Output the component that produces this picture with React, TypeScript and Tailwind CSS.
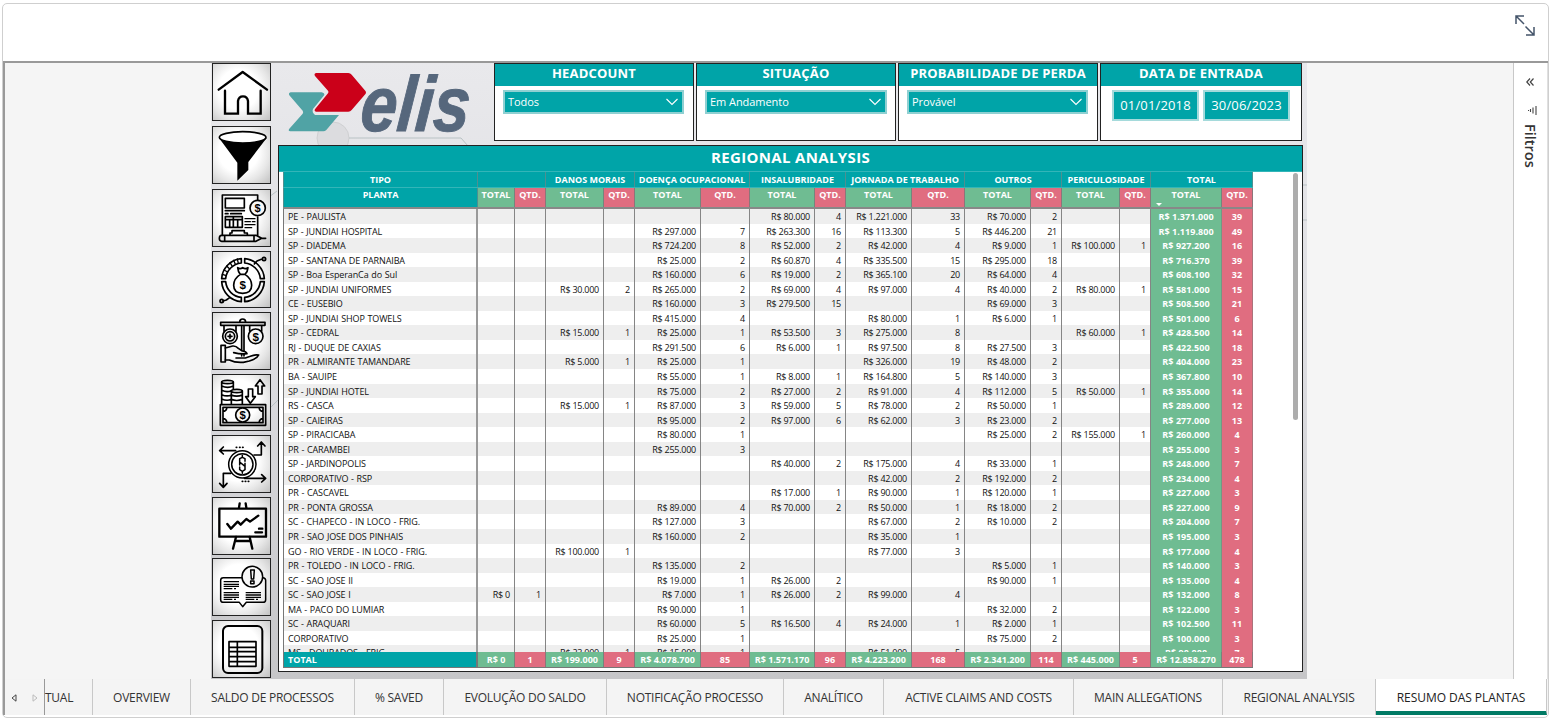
import React from "react";

const COLS =
  "grid grid-cols-[195px_37px_31px_58px_31px_66px_49px_65px_31px_66px_53px_66px_31px_58px_31px_71px_31px]";

const GROUPS: [string, string][] = [
  ["", "w-[68px]"],
  ["DANOS MORAIS", "w-[89px]"],
  ["DOENÇA OCUPACIONAL", "w-[115px]"],
  ["INSALUBRIDADE", "w-[96px]"],
  ["JORNADA DE TRABALHO", "w-[119px]"],
  ["OUTROS", "w-[97px]"],
  ["PERICULOSIDADE", "w-[89px]"],
  ["TOTAL", "w-[102px]"],
];

// name | (none) | danos | doença | insalubridade | jornada | outros | periculosidade | total
const ROWS = `PE - PAULISTA||||80.000,4|1.221.000,33|70.000,2||1.371.000,39
SP - JUNDIAI HOSPITAL|||297.000,7|263.300,16|113.300,5|446.200,21||1.119.800,49
SP - DIADEMA|||724.200,8|52.000,2|42.000,4|9.000,1|100.000,1|927.200,16
SP - SANTANA DE PARNAIBA|||25.000,2|60.870,4|335.500,15|295.000,18||716.370,39
SP - Boa EsperanCa do Sul|||160.000,6|19.000,2|365.100,20|64.000,4||608.100,32
SP - JUNDIAI UNIFORMES||30.000,2|265.000,2|69.000,4|97.000,4|40.000,2|80.000,1|581.000,15
CE - EUSEBIO|||160.000,3|279.500,15||69.000,3||508.500,21
SP - JUNDIAI SHOP TOWELS|||415.000,4||80.000,1|6.000,1||501.000,6
SP - CEDRAL||15.000,1|25.000,1|53.500,3|275.000,8||60.000,1|428.500,14
RJ - DUQUE DE CAXIAS|||291.500,6|6.000,1|97.500,8|27.500,3||422.500,18
PR - ALMIRANTE TAMANDARE||5.000,1|25.000,1||326.000,19|48.000,2||404.000,23
BA - SAUIPE|||55.000,1|8.000,1|164.800,5|140.000,3||367.800,10
SP - JUNDIAI HOTEL|||75.000,2|27.000,2|91.000,4|112.000,5|50.000,1|355.000,14
RS - CASCA||15.000,1|87.000,3|59.000,5|78.000,2|50.000,1||289.000,12
SP - CAIEIRAS|||95.000,2|97.000,6|62.000,3|23.000,2||277.000,13
SP - PIRACICABA|||80.000,1|||25.000,2|155.000,1|260.000,4
PR - CARAMBEI|||255.000,3|||||255.000,3
SP - JARDINOPOLIS||||40.000,2|175.000,4|33.000,1||248.000,7
CORPORATIVO - RSP|||||42.000,2|192.000,2||234.000,4
PR - CASCAVEL||||17.000,1|90.000,1|120.000,1||227.000,3
PR - PONTA GROSSA|||89.000,4|70.000,2|50.000,1|18.000,2||227.000,9
SC - CHAPECO - IN LOCO - FRIG.|||127.000,3||67.000,2|10.000,2||204.000,7
PR - SAO JOSE DOS PINHAIS|||160.000,2||35.000,1|||195.000,3
GO - RIO VERDE - IN LOCO - FRIG.||100.000,1|||77.000,3|||177.000,4
PR - TOLEDO - IN LOCO - FRIG.|||135.000,2|||5.000,1||140.000,3
SC - SAO JOSE II|||19.000,1|26.000,2||90.000,1||135.000,4
SC - SAO JOSE I|0,1||7.000,1|26.000,2|99.000,4|||132.000,8
MA - PACO DO LUMIAR|||90.000,1|||32.000,2||122.000,3
SC - ARAQUARI|||60.000,5|16.500,4|24.000,1|2.000,1||102.500,11
CORPORATIVO|||25.000,1|||75.000,2||100.000,3
MS - DOURADOS - FRIG.||23.000,1|15.000,1||51.000,5|||90.000,7`
  .split("\n")
  .map((l) => {
    const [name, ...groups] = l.split("|");
    return { name, cells: groups.flatMap((g) => (g ? ["R$ " + g.split(",")[0], g.split(",")[1]] : ["", ""])) };
  });

const TOTALS = [
  "R$ 0", "1", "R$ 199.000", "9", "R$ 4.078.700", "85", "R$ 1.571.170", "96",
  "R$ 4.223.200", "168", "R$ 2.341.200", "114", "R$ 445.000", "5", "R$ 12.858.270", "478",
];

const TABS: [string, string][] = [
  ["OVERVIEW", "w-[98px]"],
  ["SALDO DE PROCESSOS", "w-[164px]"],
  ["% SAVED", "w-[89px]"],
  ["EVOLUÇÃO DO SALDO", "w-[163px]"],
  ["NOTIFICAÇÃO PROCESSO", "w-[177px]"],
  ["ANALÍTICO", "w-[100px]"],
  ["ACTIVE CLAIMS AND COSTS", "w-[190px]"],
  ["MAIN ALLEGATIONS", "w-[149px]"],
  ["REGIONAL ANALYSIS", "w-[153px]"],
];

function Coin({ x, y, r, s = 34 }: { x: number; y: number; r: number; s?: number }) {
  return (
    <>
      <circle cx={x} cy={y} r={r} fill="#f7f7f7" />
      <text x={x} y={y + s * 0.36} textAnchor="middle" fontSize={s} fontWeight="700" fill="#000" stroke="none" fontFamily="Liberation Sans, sans-serif">
        $
      </text>
    </>
  );
}

const ICONS: React.ReactNode[] = [
  <g strokeWidth="7">
    <path d="M20 80 92 27l73 53" />
    <path d="M39 83v69h39v-38q2-14 15-14t15 14v38h38V83" strokeLinejoin="miter" />
  </g>,
  <g>
    <path d="M21 36 76 110v54l33-32v-24l55-72z" fill="#000" stroke="none" />
    <ellipse cx="92" cy="34" rx="70" ry="17" fill="#fff" strokeWidth="5" />
  </g>,
  <g strokeWidth="5">
    <path d="M31 139V18h106v14M137 84v55" />
    <path d="M40 28h57v29H40zM40 65h57M40 74h8M56 74h32M40 83h51v32H40zM40 92h51M53 92v23M64 83v32M77 92v23" />
    <path d="M99 89h30M99 98h16M121 98h8M99 107h30M99 116h20" strokeWidth="4" />
    <path d="M29 139h103l17 9-17 9H29q-7 0-7-9t7-9zM38 139v18M126 139v18M149 148h12M54 138v-6h6v-7h37v7h9v6" />
    <Coin x={137} y={57} r={23} s={33} />
  </g>,
  <g strokeWidth="5">
    <path d="M98 23a64 64 0 0 1 59 60h-12a52 52 0 0 0-47-47zM157 92a64 64 0 0 1-59 60v-13a52 52 0 0 0 47-47zM88 152a64 64 0 0 1-59-60h12a52 52 0 0 0 47 47zM29 83a64 64 0 0 1 59-60v13a52 52 0 0 0-47 47z" />
    <path d="m31 70 12 4M36 57l11 6M44 45l9 9M54 35l7 11M65 28l5 12M76 24l3 13" strokeWidth="4" />
    <path d="M127 39l8-9 13-5M53 140l-10 7-10 3" />
    <circle cx="156" cy="24" r="5" />
    <circle cx="29" cy="150" r="5" />
    <path d="M77 50q7 6 15 0 8 6 16 0-1 13-9 20H85q-7-8-8-20zM85 70q-20 13-20 33 0 24 27 24t27-24q0-20-20-33" />
    <text x="92" y="113" textAnchor="middle" fontSize="35" fontWeight="700" fill="#000" stroke="none" fontFamily="Liberation Sans, sans-serif">
      $
    </text>
  </g>,
  <g strokeWidth="5">
    <path d="M26 31h133v9H26zM83 31q0-10 9-10t9 10M89 40v92M96 40v92M36 40v18M72 40v18M113 40v18M149 40v18" />
    <Coin x={131} y={73} r={22} s={35} />
    <circle cx="54" cy="73" r="22" fill="#f7f7f7" />
    <circle cx="54" cy="73" r="14" />
    <path d="M54 67v12M48 73h12" />
    <path d="M27 100h13v50H27z" />
    <path d="m40 108 22-6q10-1 17 7l12 8q12 1 14 8-20 2-40-3M40 144h12q18 9 42 7l18-4q24-8 28-18-10-2-25 4l-15 5H72" fill="#f3f3f3" />
  </g>,
  <g strokeWidth="5">
    <path d="M25 92h136v62H25zM33 100h120v46H33zM33 112q10 0 12-12M153 112q-10 0-12-12M33 134q10 0 12 12M153 134q-10 0-12 12" />
    <Coin x={92} y={123} r={21} s={34} />
    <path d="M29 24v65M64 24v21M29 36q18 8 35 0M29 49q16 7 29 1M29 62q16 7 29 1M29 75q16 7 29 1M58 51v38M91 51v38M58 63q16 7 33 0M58 76q16 7 33 0" />
    <ellipse cx="46.500" cy="24" rx="17.500" ry="5" />
    <ellipse cx="74.500" cy="51" rx="16.500" ry="5" />
    <path d="M109 45h13v23h8l-15 20-14-20h8zM138 60V36h-8l14-19 14 19h-8v24z" />
  </g>,
  <g strokeWidth="4.500">
    <circle cx="91" cy="88" r="41" />
    <circle cx="91" cy="88" r="32" />
    <path d="M99 79v-8l-8-4-8 4v10l16 13v10l-8 5-8-5v-8M83 90v-9M99 94v-9M91 61v6M91 109v6" />
    <path d="M71 47H24M34 36 23 47l11 10M126 60h22V22M137 33l11-12 11 12M97 130h62M149 119l12 11-12 11M57 115H34v40M23 145l11 12 11-12" strokeWidth="5" />
    <path d="M73 37h1M83 37h1M92 37h1M91 139h1M100 139h1M109 139h1" strokeWidth="5.500" />
  </g>,
  <g strokeWidth="7">
    <path d="M22 35h140v84H22z" />
    <path d="m83 19-2 13M101 19l2 13M72 120l-9 35M113 120l8 35M70 132h46" />
    <path d="m46 81 11 14 20-21 9 9 17-17 11 8 25-18M141 95h10M130 106h20" />
  </g>,
  <g strokeWidth="4.500">
    <path d="M91 59H34q-8 0-8 8v58q0 8 8 8h48l10 13 11-13h50q8 0 8-8V67q0-6-7-8" />
    <path d="M35 71h46M35 79h46M35 85h46M35 92h26M66 92h6M35 104h46M35 111h46M35 118h46M35 124h26M66 124h6M101 104h46M101 111h46M101 118h46M101 124h26M132 124h6" strokeWidth="4" strokeLinecap="butt" />
    <circle cx="121" cy="56" r="31" fill="#f7f7f7" />
    <path d="M116 36h11l-2 27h-7zM116 69h10v8h-10z" />
  </g>,
  <g strokeWidth="6">
    <rect x="33" y="18" width="118" height="141" rx="15" />
    <path d="M51 65h81v74H51zM51 82h81M51 95h81M51 110h81M51 125h81M76 65v74" strokeWidth="5" />
  </g>,
];

function Slicer({ title, value, inner }: { title: string; value: string; inner: string }) {
  return (
    <div className="h-[78px] w-[200px] border border-[#222] bg-white">
      <div className="flex h-[22px] items-center justify-center bg-[#00a4a8] pb-[3px] text-[13px] font-bold tracking-[0.200px] whitespace-nowrap text-white">{title}</div>
      <div className={`mt-[4px] ml-[8px] flex h-[24px] items-center justify-between border-2 border-[#8fd0d2] bg-[#00a4a8] pr-[4px] pl-[3px] text-[11px] tracking-[-0.050px] text-white ${inner}`}>
        <span>{value}</span>
        <svg width="12" height="8" viewBox="0 0 12 8" fill="none" stroke="#fff" strokeWidth="1.100">
          <path d="M.5 1 6 6.500 11.500 1" />
        </svg>
      </div>
    </div>
  );
}

export default function App() {
  return (
    <div className="relative flex h-[720px] w-[1553px] flex-col overflow-hidden bg-white px-[2px] pt-[3px] font-['Open_Sans','Noto_Sans',sans-serif]">
      <div className="flex h-[715px] w-[1547px] flex-col rounded-[5px] border border-[#cfcfcf] bg-white">
        <header className="flex h-[57px] items-start justify-end pt-[11px] pr-[12px]">
          <svg width="22" height="22" viewBox="0 0 22 22" fill="none" stroke="#44546a" strokeWidth="1.500">
            <path d="M10 1H2v8M2 1l8 8M20 12v8h-8M20 20l-8.500-8.500" />
          </svg>
        </header>

        <div className="flex h-[618px] border-t-2 border-l-2 border-t-[#999] border-l-[#999] bg-[#f5f5f5] pl-[206px]">
          <main className="relative flex h-[616px] w-[1096px] bg-linear-to-b from-[#e9e9ec] via-[#dcdce0] to-[#c6c6c8]">
            <svg className="absolute top-0 left-0" width="1096" height="616" viewBox="0 0 1096 616" fill="none" stroke="#b9c2c4" strokeWidth="1">
              <circle cx="122" cy="75" r="16" fill="#dcdcdf" stroke="#cfd0d2" />
              <path d="M138 75h112l7 8M66 128l-8 6M60 196H58M60 344l8-8M1091 122h5M1091 157h5" />
            </svg>
            <nav className="relative flex h-[616px] w-[60px] flex-col gap-[3.900px] pl-px">
              {ICONS.map((icon, i) => (
                <div
                  key={i}
                  className={`h-[57.700px] w-[59px] shrink-0 border border-[#222] bg-[radial-gradient(circle_at_45%_45%,#ffffff_45%,#e6e6e6_70%,#b5b5b5_110%)] ${i < 2 ? "mb-[1.400px]" : ""}`}
                >
                  <svg className="-mt-px -ml-px" width="59" height="58" viewBox="0 0 177 174" fill="none" stroke="#000" strokeLinejoin="round" strokeLinecap="round">
                    {icon}
                  </svg>
                </div>
              ))}
            </nav>

            <div className="relative flex flex-col pl-[7px]">
              <div className="flex h-[82px]">
                <svg width="216" height="82" viewBox="219 9 648 246">
                  <path d="M333 39h97q6 0 10 5l42 50q2 4 0 7l-42 49q-4 5-10 5h-97q-7-2-2-9l38-46q3-4 0-8l-39-44q-4-7 3-9z" fill="#cb0019" />
                  <path d="M257 97h93q9 2 8 8l-34 42q-4 10 6 18h72l-38 45q-4 4-9 4h-99q-8-2-3-8l40-45q3-5 0-9l-40-46q-4-6 4-9z" fill="#50a3a5" />
                  <g transform="translate(0 212) skewX(-5)" fill="#56677c" stroke="#56677c" strokeWidth="3">
                    <text x="462" y="0" textLength="328" lengthAdjust="spacingAndGlyphs" fontFamily="Liberation Sans, Arial, sans-serif" fontWeight="700" fontStyle="italic" fontSize="234">
                      elis
                    </text>
                  </g>
                </svg>
                <div className="flex gap-[2px]">
                  <Slicer title="HEADCOUNT" value="Todos" inner="w-[181px]" />
                  <Slicer title="SITUAÇÃO" value="Em Andamento" inner="w-[182px]" />
                  <Slicer title="PROBABILIDADE DE PERDA" value="Provável" inner="w-[181px]" />
                  <div className="h-[78px] w-[202px] border border-[#222] bg-white">
                    <div className="flex h-[22px] items-center justify-center bg-[#00a4a8] pb-[3px] text-[13px] font-bold tracking-[0.250px] text-white">DATA DE ENTRADA</div>
                    <div className="mt-[4px] ml-[11px] flex gap-[4px] text-[13px] tracking-[0.150px] text-white">
                      {["01/01/2018", "30/06/2023"].map((d) => (
                        <div key={d} className="flex h-[31px] w-[87px] items-center justify-center border-2 border-[#a5dadb] bg-[#00a4a8]">
                          {d}
                        </div>
                      ))}
                    </div>
                  </div>
                </div>
              </div>

              <section className="h-[527px] w-[1025px] border border-[#222] bg-white">
                <h1 className="flex h-[26px] items-center justify-center border-b border-[#33b5b8] bg-[#00a4a8] pb-[2px] text-[15px] font-bold tracking-[0.350px] text-white">REGIONAL ANALYSIS</h1>
                <div className="flex justify-between pr-[4px] pl-[4px]">
                  <div className="h-[497px] w-[970px] text-[9px]">
                    <div className="flex h-[15px] bg-[#00a4a8] leading-[16px] font-bold text-white">
                      <div className="w-[195px] border-x border-[#4f8f90] text-center">TIPO</div>
                      {GROUPS.map(([g, w], i) => (
                        <div key={i} className={`border-r border-[#4f8f90] text-center whitespace-nowrap ${w}`}>{g}</div>
                      ))}
                    </div>
                    <div className={`${COLS} h-[22px] border-t border-b-2 border-t-[#33b5b8] border-b-[#888] leading-[13px] font-bold text-white`}>
                      <div className="border-x border-[#4f8f90] bg-[#00a4a8] text-center">PLANTA</div>
                      {TOTALS.map((_, i) => (
                        <div key={i} className={`relative border-r border-[#777]/80 text-center ${i % 2 ? "bg-[#e06d80]" : "bg-[#6fbc92]"}`}>
                          {i % 2 ? "QTD." : "TOTAL"}
                          {i === 14 && <span className="absolute bottom-[1px] left-[5px] border-x-[3px] border-t-[3px] border-x-transparent border-t-white" />}
                        </div>
                      ))}
                    </div>
                    <div className="h-[443px] overflow-hidden">
                      {ROWS.map((r, ri) => (
                        <div key={ri} className={`${COLS} h-[14.560px] leading-[15px] text-[#111] ${ri % 2 ? "bg-white" : "bg-[#eeeeee]"}`}>
                          <div className="border-r-2 border-l border-r-[#999] border-l-[#777] pl-[4px] tracking-[-0.120px] [word-spacing:0.500px] whitespace-nowrap">{r.name}</div>
                          {r.cells.map((c, i) =>
                            i < 14 ? (
                              <div key={i} className="border-r border-[#858585] pr-[4px] text-right tracking-[-0.250px] whitespace-nowrap">{c}</div>
                            ) : (
                              <div key={i} className={`border-r border-b border-r-[#777]/50 border-b-white/40 text-center font-bold tracking-[0.050px] whitespace-nowrap text-white ${i === 14 ? "bg-[#6fbc92]" : "bg-[#e06d80]"}`}>{c}</div>
                            )
                          )}
                        </div>
                      ))}
                    </div>
                    <div className={`${COLS} h-[16px] border-b border-[#777] leading-[15px] font-bold text-white`}>
                      <div className="border-r-2 border-l border-[#777] bg-[#00a4a8] pl-[4px]">TOTAL</div>
                      {TOTALS.map((t, i) => (
                        <div key={i} className={`border-r border-[#777]/80 text-center whitespace-nowrap ${i % 2 ? "bg-[#e06d80]" : "bg-[#6fbc92]"}`}>{t}</div>
                      ))}
                    </div>
                  </div>
                  <div className="mt-px h-[247px] w-[5px] rounded-full bg-[#adadad]" />
                </div>
              </section>
            </div>
          </main>

          <aside className="ml-auto flex h-[616px] w-[35px] flex-col items-center border-x border-l-[#c8c8c8] border-r-[#e0e0e0] bg-white pt-[15px] pr-[2px]">
            <svg width="8" height="8" viewBox="0 0 8 8" fill="none" stroke="#444" strokeWidth="1.200">
              <path d="M4 .5.800 4 4 7.500M7.500.5 4.300 4l3.200 3.500" />
            </svg>
            <svg className="mt-[20px] ml-[6px]" width="9" height="9" viewBox="0 0 9 9" fill="none" stroke="#444" strokeWidth="1.100">
              <path d="M8 0v9M5 1.500v6M2.500 3v3M.5 4v1" />
            </svg>
            <span className="mt-[9px] text-[14.500px] leading-[18px] font-semibold text-[#333] [writing-mode:vertical-rl]">Filtros</span>
          </aside>
        </div>

        <footer className="flex h-[36px] border-l-2 border-l-[#999] bg-[#f4f4f4] text-[12px] tracking-[-0.250px] text-[#333]">
          <div className="flex w-[40px] items-center gap-[15px] border-r border-[#999] pt-[2px] pl-[6px]">
            <svg width="6" height="8" viewBox="0 0 6 8" fill="none" stroke="#444">
              <path d="M5 .8v6.400L1 4z" />
            </svg>
            <svg width="6" height="8" viewBox="0 0 6 8" fill="none" stroke="#bbb">
              <path d="M1 .8v6.400L5 4z" />
            </svg>
          </div>
          <div className="flex w-[48px] items-center border-r border-[#c8c8c8] pt-[2px]">TUAL</div>
          {TABS.map(([t, w]) => (
            <div key={t} className={`flex items-center justify-center border-r border-[#c8c8c8] pt-[2px] whitespace-nowrap ${w}`}>{t}</div>
          ))}
          <div className="flex w-[171px] items-center justify-center border-r border-b-4 border-r-[#c8c8c8] border-b-[#007a64] bg-white pt-[5px] font-medium tracking-[-0.050px] whitespace-nowrap text-[#222]">RESUMO DAS PLANTAS</div>
        </footer>
      </div>
    </div>
  );
}
